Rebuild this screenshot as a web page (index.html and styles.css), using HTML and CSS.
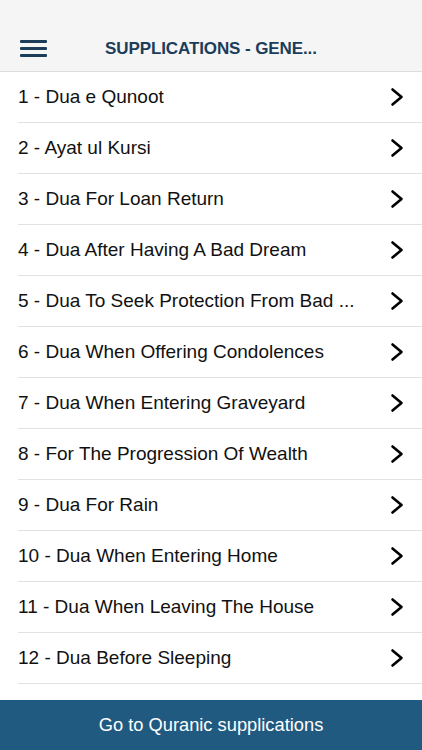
FILE: index.html
```html
<!DOCTYPE html>
<html lang="en">
<head>
  <meta charset="UTF-8" />
  <meta name="viewport" content="width=device-width, initial-scale=1.0"/>
  <title>Supplications - General</title>
  <link rel="stylesheet" href="styles.css">
</head>
<body>
  <div class="app">
    <div class="topbar">
      <button class="menu-btn" aria-label="Menu">
        <span></span><span></span><span></span>
      </button>
      <h1 class="title">SUPPLICATIONS - GENE...</h1>
    </div>

    <ul class="list">
      <li class="row"><span class="label">1 - Dua e Qunoot</span><svg class="chev" viewBox="0 0 14 20"><path d="M2.5 2.5 L11.5 10 L2.5 17.5"/></svg></li>
      <li class="row"><span class="label">2 - Ayat ul Kursi</span><svg class="chev" viewBox="0 0 14 20"><path d="M2.5 2.5 L11.5 10 L2.5 17.5"/></svg></li>
      <li class="row"><span class="label">3 - Dua For Loan Return</span><svg class="chev" viewBox="0 0 14 20"><path d="M2.5 2.5 L11.5 10 L2.5 17.5"/></svg></li>
      <li class="row"><span class="label">4 - Dua After Having A Bad Dream</span><svg class="chev" viewBox="0 0 14 20"><path d="M2.5 2.5 L11.5 10 L2.5 17.5"/></svg></li>
      <li class="row"><span class="label">5 - Dua To Seek Protection From Bad ...</span><svg class="chev" viewBox="0 0 14 20"><path d="M2.5 2.5 L11.5 10 L2.5 17.5"/></svg></li>
      <li class="row"><span class="label">6 - Dua When Offering Condolences</span><svg class="chev" viewBox="0 0 14 20"><path d="M2.5 2.5 L11.5 10 L2.5 17.5"/></svg></li>
      <li class="row"><span class="label">7 - Dua When Entering Graveyard</span><svg class="chev" viewBox="0 0 14 20"><path d="M2.5 2.5 L11.5 10 L2.5 17.5"/></svg></li>
      <li class="row"><span class="label">8 - For The Progression Of Wealth</span><svg class="chev" viewBox="0 0 14 20"><path d="M2.5 2.5 L11.5 10 L2.5 17.5"/></svg></li>
      <li class="row"><span class="label">9 - Dua For Rain</span><svg class="chev" viewBox="0 0 14 20"><path d="M2.5 2.5 L11.5 10 L2.5 17.5"/></svg></li>
      <li class="row"><span class="label">10 - Dua When Entering Home</span><svg class="chev" viewBox="0 0 14 20"><path d="M2.5 2.5 L11.5 10 L2.5 17.5"/></svg></li>
      <li class="row"><span class="label">11 - Dua When Leaving The House</span><svg class="chev" viewBox="0 0 14 20"><path d="M2.5 2.5 L11.5 10 L2.5 17.5"/></svg></li>
      <li class="row"><span class="label">12 - Dua Before Sleeping</span><svg class="chev" viewBox="0 0 14 20"><path d="M2.5 2.5 L11.5 10 L2.5 17.5"/></svg></li>
    </ul>

    <div class="footer">Go to Quranic supplications</div>
  </div>
</body>
</html>
```

FILE: styles.css
```css
html, body {
  margin: 0;
  padding: 0;
}
body {
  font-family: "Liberation Sans", Arial, sans-serif;
  background: #fff;
  color: #111;
}
.app {
  display: flex;
  flex-direction: column;
  height: 750px;
  overflow: hidden;
}
.topbar {
  height: 72px;
  flex: none;
  box-sizing: border-box;
  background: #f5f5f5;
  border-bottom: 1px solid #dcdcdc;
  display: flex;
  align-items: center;
  padding: 26px 0 0 20px;
}
.menu-btn {
  width: 27px;
  height: 17px;
  padding: 0;
  border: none;
  background: none;
  display: flex;
  flex-direction: column;
  justify-content: space-between;
}
.menu-btn span {
  display: block;
  height: 3px;
  background: #1c3d5a;
  border-radius: 1px;
}
.title {
  margin: 0 0 0 58px;
  font-size: 17px;
  font-weight: bold;
  color: #1c3d5a;
  letter-spacing: -0.1px;
}
.list {
  list-style: none;
  margin: 0;
  padding: 0 0 0 18px;
  flex: 1;
  overflow: hidden;
}
.row {
  height: 50px;
  border-bottom: 1px solid #e2e2e2;
  display: flex;
  align-items: center;
  justify-content: space-between;
  padding-right: 18px;
}
.label {
  font-size: 19px;
  white-space: nowrap;
  overflow: hidden;
  max-width: 345px;
}
.chev {
  width: 14px;
  height: 20px;
  fill: none;
  stroke: #000;
  stroke-width: 2.6;
  stroke-linecap: round;
  stroke-linejoin: round;
}
.footer {
  flex: none;
  height: 50px;
  background: #215a80;
  color: #fff;
  font-size: 18.3px;
  display: flex;
  align-items: center;
  justify-content: center;
}
```
